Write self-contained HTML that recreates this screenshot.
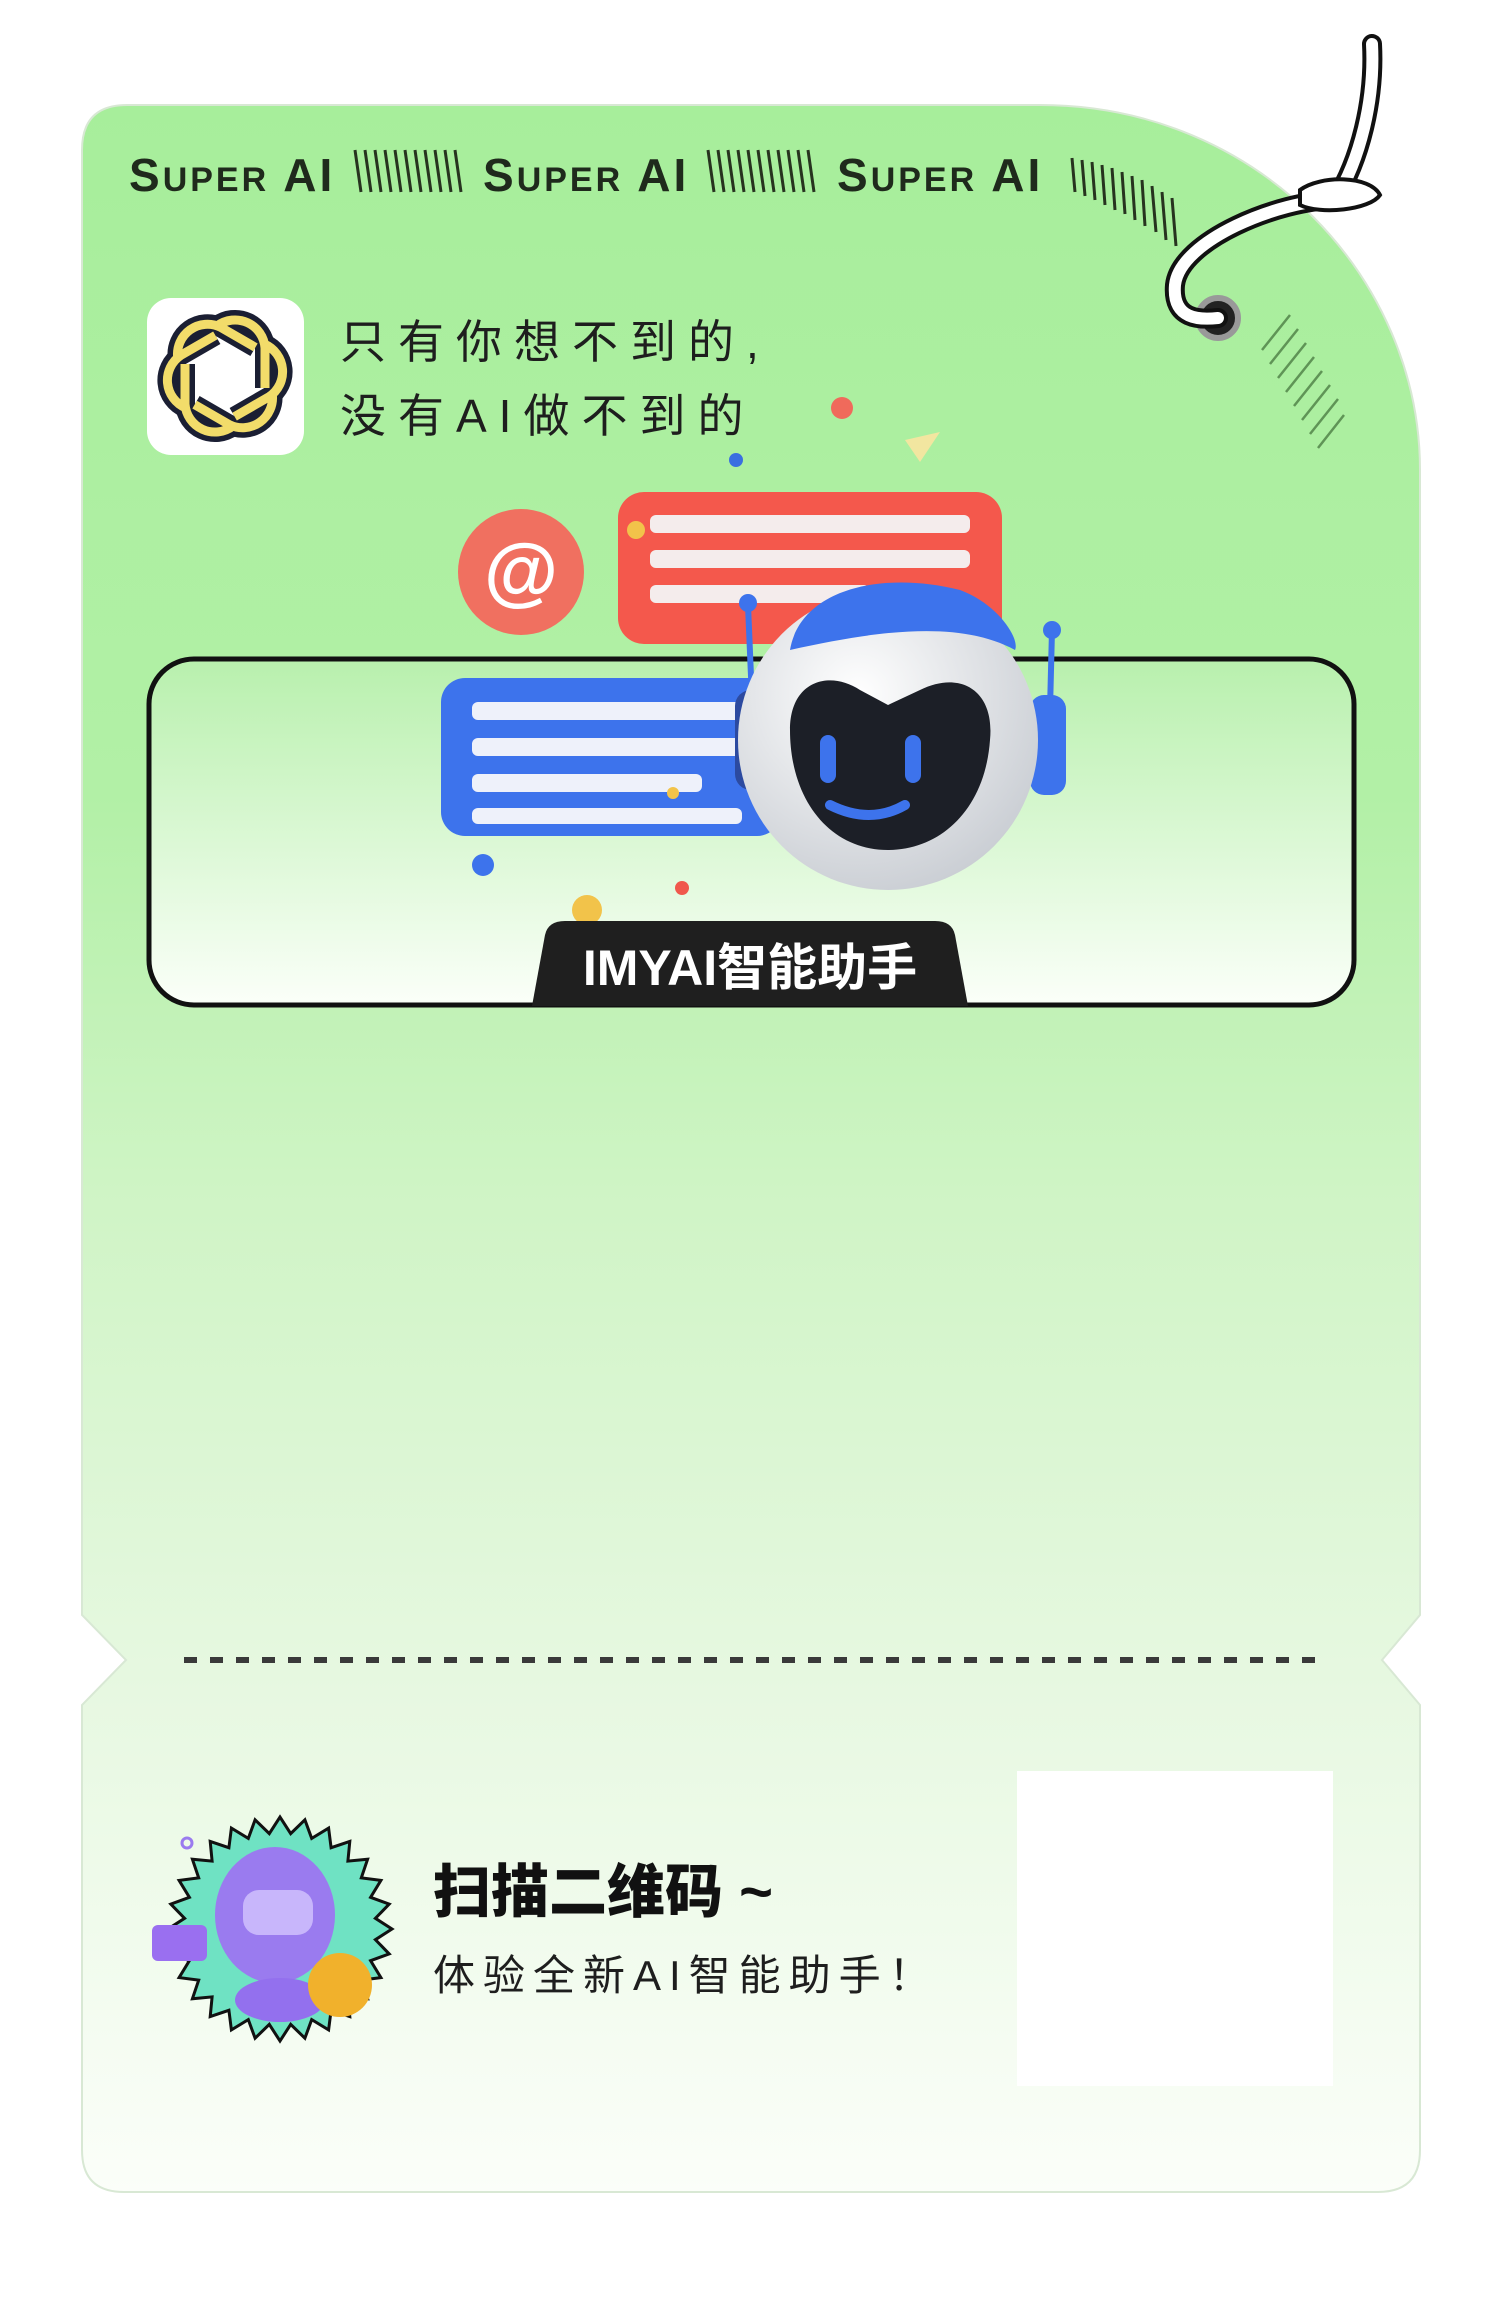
<!DOCTYPE html>
<html><head><meta charset="utf-8"><style>
html,body{margin:0;padding:0;background:#fff;}
body{width:1502px;height:2299px;position:relative;overflow:hidden;font-family:"Liberation Sans","Noto Sans CJK SC",sans-serif;}
.abs{position:absolute;}
.sa{position:absolute;top:148px;font-weight:bold;font-size:46px;color:#1f2a1c;letter-spacing:3px;white-space:nowrap;}
.sa small{font-size:34px;}
.l1{position:absolute;left:340px;font-size:46px;color:#1e1e1e;letter-spacing:12px;white-space:nowrap;}
</style></head><body>
<svg class="abs" style="left:0;top:0" width="1502" height="2299" viewBox="0 0 1502 2299">
<defs>
<linearGradient id="bg" x1="0" y1="0" x2="0" y2="1">
<stop offset="0" stop-color="#a7ee9b"/>
<stop offset="0.33" stop-color="#b2f0a6"/>
<stop offset="0.52" stop-color="#cff4c5"/>
<stop offset="0.75" stop-color="#e6f8e0"/>
<stop offset="1" stop-color="#fbfef9"/>
</linearGradient>
<linearGradient id="pn" x1="0" y1="0" x2="0" y2="1">
<stop offset="0" stop-color="#b8f0ad"/>
<stop offset="1" stop-color="#fbfff9"/>
</linearGradient>
<radialGradient id="hd" cx="0.4" cy="0.35" r="0.7"><stop offset="0" stop-color="#ffffff"/><stop offset="1" stop-color="#c9cdd3"/></radialGradient>
</defs>
<path d="M82,150 Q82,105 127,105 L1040,105 C1260,105 1420,280 1420,470 L1420,1615 L1382,1660 L1420,1705 L1420,2150 Q1420,2192 1378,2192 L124,2192 Q82,2192 82,2150 L82,1705 L126,1660 L82,1615 Z" fill="url(#bg)" stroke="#d8e8d4" stroke-width="2"/>
<g stroke="#27331f" stroke-width="3">
<path d="M355,150 l6,42 M365,150 l6,42 M375,150 l6,42 M385,150 l6,42 M395,150 l6,42 M405,150 l6,42 M415,150 l6,42 M425,150 l6,42 M435,150 l6,42 M445,150 l6,42 M455,150 l6,42"/>
<path d="M708,150 l6,42 M718,150 l6,42 M728,150 l6,42 M738,150 l6,42 M748,150 l6,42 M758,150 l6,42 M768,150 l6,42 M778,150 l6,42 M788,150 l6,42 M798,150 l6,42 M808,150 l6,42"/>
<path d="M1072,158 l3,34 M1082,160 l3,36 M1092,162 l3,38 M1102,165 l3,40 M1112,168 l3,42 M1122,172 l3,42 M1132,176 l3,44 M1142,180 l3,46 M1152,186 l4,46 M1162,192 l4,48 M1172,198 l4,48"/>
</g>
<g stroke="#5f9456" stroke-width="2.5">
<path d="M1262,350 l28,-35 M1270,364 l28,-35 M1278,378 l28,-35 M1286,392 l28,-35 M1294,406 l28,-35 M1302,420 l28,-35 M1310,434 l28,-35 M1318,448 l26,-33"/>
</g>
<circle cx="1218" cy="318" r="20" fill="#222" stroke="#999" stroke-width="6"/>
<circle cx="1218" cy="318" r="7" fill="#ddd"/>
<g fill="none" stroke-linecap="round">
<path d="M1372,44 C1375,100 1360,160 1335,200 C1280,200 1180,240 1175,285 C1172,320 1200,320 1218,318" stroke="#111" stroke-width="20"/>
<path d="M1372,44 C1375,100 1360,160 1335,200 C1280,200 1180,240 1175,285 C1172,320 1200,320 1218,318" stroke="#fff" stroke-width="12"/>
<path d="M1300,190 C1320,175 1370,175 1380,195 C1370,210 1320,215 1300,205 Z" fill="#fff" stroke="#111" stroke-width="4"/>
</g>
<rect x="147" y="298" width="157" height="157" rx="24" fill="#fff"/>
<g transform="translate(225,376)" fill="none" stroke="#1b1f33" stroke-width="20">
<g id="pet"><path d="M-8,-50 a30,30 0 0 1 48,22 l0,40"/></g>
<use href="#pet" transform="rotate(60)"/><use href="#pet" transform="rotate(120)"/><use href="#pet" transform="rotate(180)"/><use href="#pet" transform="rotate(240)"/><use href="#pet" transform="rotate(300)"/>
</g>
<g transform="translate(225,376)" fill="none" stroke="#f2dc6a" stroke-width="9">
<g id="pet2"><path d="M-8,-50 a30,30 0 0 1 48,22 l0,40"/></g>
<use href="#pet2" transform="rotate(60)"/><use href="#pet2" transform="rotate(120)"/><use href="#pet2" transform="rotate(180)"/><use href="#pet2" transform="rotate(240)"/><use href="#pet2" transform="rotate(300)"/>
</g>
<rect x="149" y="659" width="1205" height="346" rx="45" fill="url(#pn)" stroke="#111" stroke-width="5"/>
<circle cx="842" cy="408" r="11" fill="#f06a5b"/>
<circle cx="736" cy="460" r="7" fill="#3a6fe0"/>
<path d="M905,440 l35,-8 l-20,30 z" fill="#f2e6a0"/>
<circle cx="521" cy="572" r="63" fill="#f07060"/>
<text x="521" y="597" text-anchor="middle" font-size="76" font-weight="bold" fill="#fff" font-family="Liberation Sans">@</text>
<rect x="618" y="492" width="384" height="152" rx="26" fill="#f4584c"/>
<g fill="#f4ecec"><rect x="650" y="515" width="320" height="18" rx="6"/><rect x="650" y="550" width="320" height="18" rx="6"/><rect x="650" y="585" width="220" height="18" rx="6"/></g>
<circle cx="636" cy="530" r="9" fill="#f2c34a"/>
<rect x="441" y="678" width="340" height="158" rx="24" fill="#3d73ec"/>
<g fill="#eef1fa"><rect x="472" y="702" width="270" height="18" rx="6"/><rect x="472" y="738" width="270" height="18" rx="6"/><rect x="472" y="774" width="230" height="18" rx="6"/><rect x="472" y="808" width="270" height="16" rx="6"/></g>
<circle cx="673" cy="793" r="6" fill="#f2c34a"/>
<circle cx="483" cy="865" r="11" fill="#3d73ec"/>
<circle cx="682" cy="888" r="7" fill="#f0584c"/>
<circle cx="587" cy="910" r="15" fill="#f2c34a"/>
<g stroke="#3d73ec" stroke-width="6"><line x1="748" y1="605" x2="752" y2="700"/><line x1="1052" y1="630" x2="1050" y2="710"/></g>
<circle cx="748" cy="603" r="9" fill="#3d73ec"/><circle cx="1052" cy="630" r="9" fill="#3d73ec"/>
<rect x="735" y="690" width="40" height="100" rx="16" fill="#2c4aa0"/>
<rect x="1030" y="695" width="36" height="100" rx="14" fill="#3d73ec"/>
<circle cx="888" cy="740" r="150" fill="url(#hd)"/>
<path d="M790,650 C800,590 880,570 960,590 C1000,605 1020,640 1015,650 C960,620 880,630 790,650 Z" fill="#3d73ec"/>
<path d="M790,730 C790,680 830,670 860,690 L888,705 L920,690 C960,670 995,690 990,740 C985,810 940,850 888,850 C830,850 790,800 790,730 Z" fill="#1c1f27"/>
<rect x="820" y="735" width="16" height="48" rx="8" fill="#3d73ec"/>
<rect x="905" y="735" width="16" height="48" rx="8" fill="#3d73ec"/>
<path d="M830,805 Q870,825 905,805" stroke="#3d73ec" stroke-width="10" fill="none" stroke-linecap="round"/>
<path d="M532,1006 L545,935 Q548,921 565,921 L935,921 Q952,921 955,935 L968,1006 Z" fill="#1f1f1f"/>
<line x1="184" y1="1660" x2="1315" y2="1660" stroke="#3a3a3a" stroke-width="6" stroke-dasharray="13,13"/>
<polygon id="star" fill="#6fe2c3" stroke="#111" stroke-width="3" points=""/>
<ellipse cx="275" cy="1915" rx="60" ry="68" fill="#9a7bef"/>
<rect x="243" y="1890" width="70" height="45" rx="16" fill="#c8b6fb"/>
<ellipse cx="280" cy="2000" rx="45" ry="22" fill="#9370ee"/>
<rect x="152" y="1925" width="55" height="36" rx="6" fill="#9a6ff0"/>
<circle cx="340" cy="1985" r="32" fill="#f1b12c"/>
<circle cx="187" cy="1843" r="5" fill="none" stroke="#9a7bef" stroke-width="3"/>
<rect x="1017" y="1771" width="316" height="315" fill="#fff"/>
</svg>
<script>
(function(){var p=[],n=28,cx=280,cy=1929;for(var i=0;i<n*2;i++){var r=i%2?96:112,a=Math.PI*i/n;p.push((cx+r*Math.cos(a)).toFixed(1)+','+(cy+r*Math.sin(a)).toFixed(1));}document.getElementById('star').setAttribute('points',p.join(' '));})();
</script>
<div class="sa" style="left:129px">S<small>UPER</small> AI</div>
<div class="sa" style="left:483px">S<small>UPER</small> AI</div>
<div class="sa" style="left:837px">S<small>UPER</small> AI</div>
<div class="l1" style="top:306px">只有你想不到的,</div>
<div class="l1" style="top:380px">没有AI做不到的</div>
<div class="abs" style="left:532px;width:436px;top:928px;text-align:center;color:#fff;font-weight:bold;font-size:50px;white-space:nowrap;">IMYAI智能助手</div>
<div class="abs" style="left:433px;top:1845px;font-size:58px;font-weight:900;color:#111;white-space:nowrap;">扫描二维码 ~</div>
<div class="abs" style="left:433px;top:1942px;font-size:42px;color:#1e1e1e;letter-spacing:8px;white-space:nowrap;">体验全新AI智能助手！</div>
</body></html>
